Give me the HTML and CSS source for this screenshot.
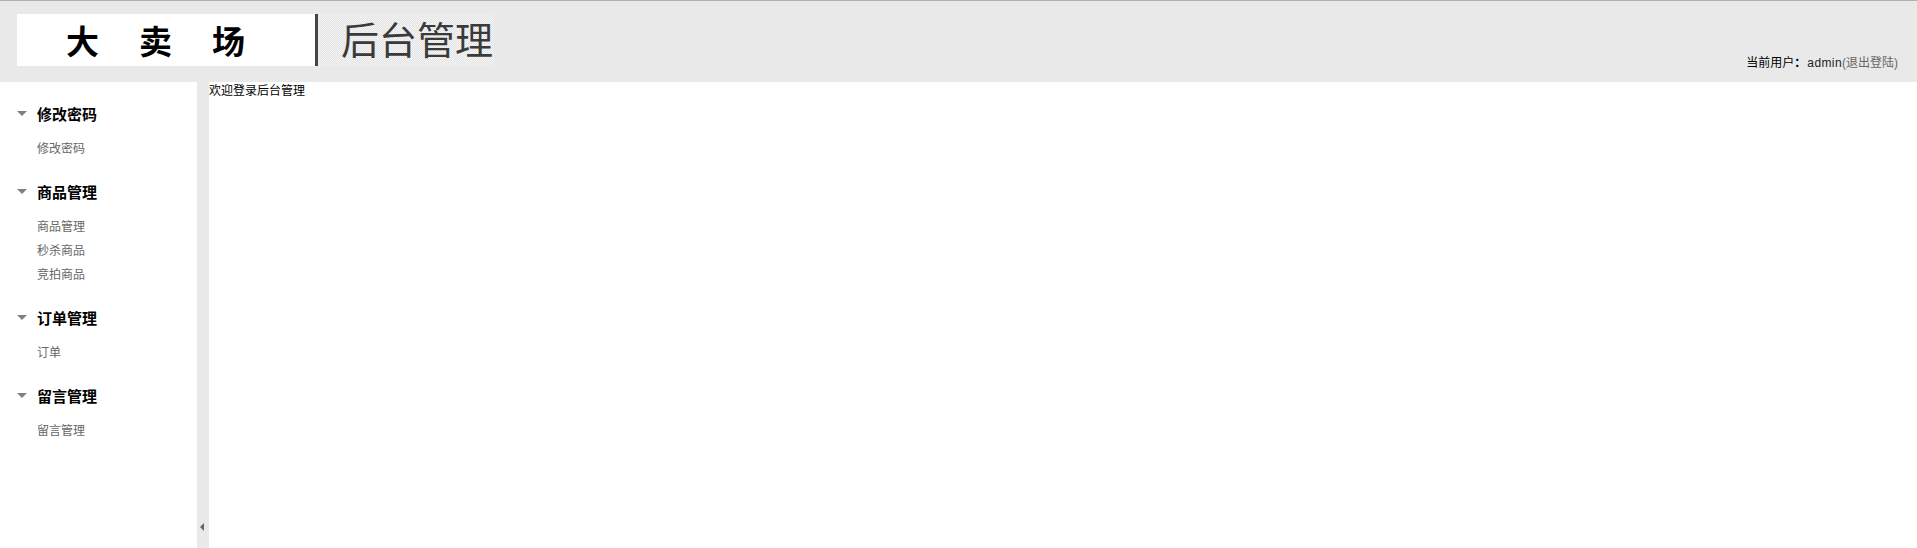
FILE: index.html
```html
<!DOCTYPE html>
<html lang="zh-CN">
<head>
  <meta charset="UTF-8">
  <title>后台管理</title>
  <link rel="stylesheet" href="styles.css">
</head>
<body>
  <div class="top">
    <div class="logo">
      <div class="logo-name">大卖场</div>
      <div class="logo-title">后台管理</div>
    </div>
    <div class="user">当前用户<b class="colon">：</b><span class="user-name">admin</span><a class="logout" href="#">(退出登陆)</a></div>
  </div>
  <div class="main">
    <div class="side">
      <div class="group">
        <div class="group-title"><i class="arrow"></i>修改密码</div>
        <a class="item" href="#">修改密码</a>
      </div>
      <div class="group">
        <div class="group-title"><i class="arrow"></i>商品管理</div>
        <a class="item" href="#">商品管理</a>
        <a class="item" href="#">秒杀商品</a>
        <a class="item" href="#">竞拍商品</a>
      </div>
      <div class="group">
        <div class="group-title"><i class="arrow"></i>订单管理</div>
        <a class="item" href="#">订单</a>
      </div>
      <div class="group">
        <div class="group-title"><i class="arrow"></i>留言管理</div>
        <a class="item" href="#">留言管理</a>
      </div>
    </div>
    <div class="gutter"><i class="collapse"></i></div>
    <div class="content">欢迎登录后台管理</div>
  </div>
</body>
</html>
```

FILE: styles.css
```css
* {
  box-sizing: border-box;
}
html, body {
  height: 100%;
}
body {
  margin: 0;
  display: flex;
  flex-direction: column;
  overflow: hidden;
  background: #fff;
  color: #000;
  font-family: "Liberation Sans", "Noto Sans CJK SC", sans-serif;
  font-size: 12px;
}
a {
  text-decoration: none;
}
.top {
  height: 82px;
  flex: none;
  display: flex;
  justify-content: space-between;
  padding: 13px 19px 0 17px;
  background: #e9e9e9;
  border-top: 1px solid #b0b0b0;
}
.logo {
  display: flex;
  height: 52px;
}
.logo-name {
  width: 298px;
  padding: 3px 0 0 49px;
  background: #fff;
  font-size: 33px;
  font-weight: bold;
  line-height: 52px;
  letter-spacing: 40px;
}
.logo-title {
  width: 179px;
  padding-left: 23px;
  border-left: 3px solid #444;
  background: repeating-conic-gradient(#e4e4e4 0 25%, #f4f4f4 0 50%) 0 0 / 2px 2px;
  color: #3a3a3a;
  font-size: 38px;
  line-height: 54px;
  white-space: nowrap;
}
.user {
  align-self: flex-end;
  padding-bottom: 11px;
  line-height: 16px;
}
.colon {
  margin-right: 1px;
}
.user-name {
  color: #222;
  letter-spacing: 0.4px;
}
.logout {
  color: #666;
}
.main {
  flex: 1;
  display: flex;
}
.side {
  width: 197px;
  padding-top: 20px;
}
.group {
  margin-bottom: 19px;
}
.group-title {
  display: flex;
  align-items: center;
  height: 22px;
  margin-bottom: 13px;
  padding-left: 17px;
  font-size: 15px;
  font-weight: bold;
}
.arrow {
  width: 0;
  height: 0;
  margin-right: 10px;
  border-style: solid;
  border-width: 5px 5px 0;
  border-color: #808080 transparent transparent;
}
.item {
  display: block;
  padding-left: 37px;
  color: #666;
  line-height: 24px;
}
.gutter {
  width: 12px;
  display: flex;
  align-items: flex-end;
  padding: 0 0 17px 3px;
  background: #e9e9e9;
}
.collapse {
  width: 0;
  height: 0;
  border-style: solid;
  border-width: 4px 4px 4px 0;
  border-color: transparent #666 transparent transparent;
}
.content {
  flex: 1;
  line-height: 18px;
}
```
